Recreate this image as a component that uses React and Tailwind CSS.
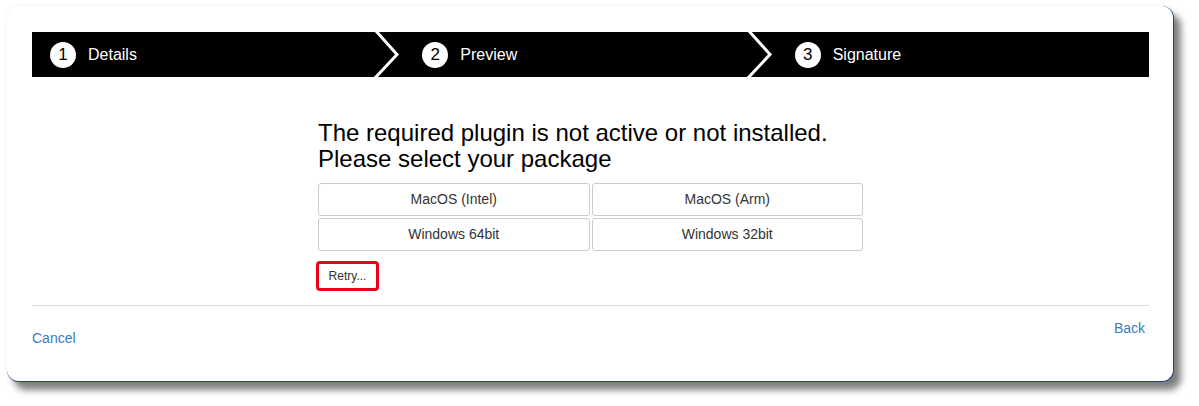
import React from 'react';

const steps = ['Details', 'Preview', 'Signature'];
const packages = ['MacOS (Intel)', 'MacOS (Arm)', 'Windows 64bit', 'Windows 32bit'];

function Chevron() {
  return (
    <svg className="absolute right-[3px] top-0" width="28" height="45" viewBox="0 0 28 45">
      <path d="M3 -1 L24 22.5 L2 46" fill="none" stroke="#ffffff" strokeWidth="3" />
    </svg>
  );
}

export default function App() {
  return (
    <div className="w-[1199px] h-[406px] bg-white pt-[6px] pl-[7px]" style={{ fontFamily: '"Liberation Sans", Arial, sans-serif' }}>
      <div className="w-[1167px] h-[376px] bg-white rounded-[12px] border-r border-b border-[#1f3f86] shadow-[7px_8px_7px_rgba(0,0,0,0.5),0_0_4px_rgba(0,0,0,0.06)] pt-[26px] pl-[25px] pr-[24px]">
        {/* stepper */}
        <div className="flex h-[45px] bg-black">
          {steps.map((s, i) => (
            <div key={s} className="relative flex-1 flex items-center pl-[18px]">
              <span className="w-[26px] h-[26px] rounded-full bg-white text-black flex items-center justify-center text-[17px]">{i + 1}</span>
              <span className="ml-[12px] text-white text-[16px]">{s}</span>
              {i < 2 && <Chevron />}
            </div>
          ))}
        </div>

        {/* body */}
        <div className="w-[545px] mx-auto pt-[43px]">
          <h2 className="text-[24px] leading-[26px] text-black whitespace-nowrap">
            The required plugin is not active or not installed.<br />Please select your package
          </h2>
          <div className="grid grid-cols-2 gap-[2px] mt-[11px]">
            {packages.map((p) => (
              <button key={p} className="h-[33px] border border-[#cccccc] rounded-[3px] bg-white text-[14px] text-[#333333]">
                {p}
              </button>
            ))}
          </div>
          <button className="mt-[10px] -ml-[2px] w-[63px] h-[30px] border-[3px] border-[#e8001c] rounded-[4px] bg-white text-[12px] text-[#333333]">
            Retry...
          </button>
        </div>

        {/* footer */}
        <div className="mt-[14px] border-t border-[#d9d9d9] flex justify-between">
          <a className="mt-[22px] text-[14px] text-[#3a7cc2]">Cancel</a>
          <a className="mt-[12px] mr-[4px] text-[14px] text-[#3a7cc2]">Back</a>
        </div>
      </div>
    </div>
  );
}
